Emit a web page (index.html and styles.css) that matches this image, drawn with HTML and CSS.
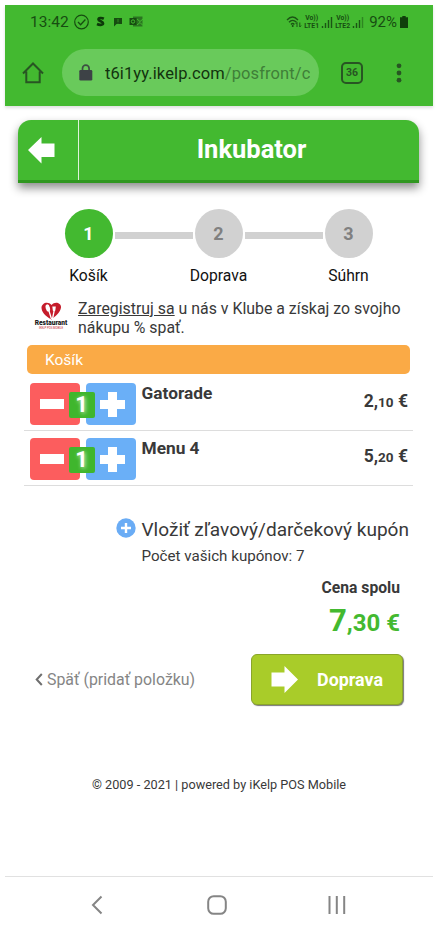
FILE: index.html
```html
<!DOCTYPE html>
<html lang="sk">
<head>
<meta charset="utf-8">
<title>Inkubator</title>
<link rel="stylesheet" href="styles.css">
</head>
<body>
<div class="phone">
  <header class="chrome">
    <div class="status">
      <span class="time">13:42</span>
      <svg class="notif" width="72" height="18" viewBox="0 0 72 18">
        <circle cx="7.500" cy="9" r="6.800" fill="none" stroke="#164c10" stroke-width="1.200"/>
        <path d="M4 9l2.600 2.700 4.800-5.200" fill="none" stroke="#164c10" stroke-width="1.300"/>
        <path d="M29.800 5.700c-2.200-1.100-5.300-.9-5.300.7 0 2.200 4.500 1.700 4.500 3.900 0 2-3.800 1.800-6 .8" fill="none" stroke="#0d3a09" stroke-width="2.700"/>
        <path d="M40 5h8v6h-5.500l-2.500 2.500z" fill="#164c10"/>
        <path d="M44 6v3M44 9.700v.8" stroke="#43b930" stroke-width=".6"/>
        <path d="M59 3.500h9.500v10h-9.500z" fill="#2a7420"/>
        <path d="M55.500 5h7v7h-7z" fill="#164c10"/>
        <circle cx="59" cy="8.500" r="1.700" fill="none" stroke="#43b930"/>
        <path d="M63 6l3 2.500 3-2.500M63 12l3-2.500 3 3" fill="none" stroke="#43b930" stroke-width="1"/>
      </svg>
      <div class="signals">
        <svg width="17" height="16" viewBox="0 0 17 16" fill="none" stroke="#1b5514" stroke-width="1.300">
          <path d="M1 6q5.500-6 11 0M3 8.300q3.500-4 7.500 0M5 10.500q1.700-2 3.400 0"/>
          <path d="M6.700 11v2" stroke-width="1.600"/><path d="M11 13v-4.500l-1.300 1.500M13.800 8.500v4.500l1.300-1.500" stroke-width="1"/>
        </svg>
        <span class="volte"><b>Vo))</b><b>LTE1</b></span>
        <svg width="12" height="13" viewBox="0 0 12 13" stroke="#1b5514" stroke-width="1.400"><path d="M1.500 12v-2M4.500 12v-5M7.500 12v-8M10.500 12v-11"/></svg>
        <span class="volte second"><b>Vo))</b><b>LTE2</b></span>
        <svg width="12" height="13" viewBox="0 0 12 13" stroke="#1b5514" stroke-width="1.400"><path d="M1.500 12v-2M4.500 12v-5M7.500 12v-8"/><path d="M10.500 12v-11" opacity=".5"/></svg>
      </div>
      <span class="percent">92%</span>
      <svg class="battery" width="8" height="12" viewBox="0 0 8 12" fill="#103f0b"><path d="M2.300 0h3.400v1.300h2.300v10.700h-8v-10.700h2.300z"/></svg>
    </div>
    <div class="browser">
      <svg class="home" width="22" height="24" viewBox="0 0 22 24" fill="none" stroke="#285523" stroke-width="2"><path d="M1 12.500L11 2.500l10 10M4.300 10.500v10.700h13.400v-10.700"/></svg>
      <div class="address">
        <svg width="14" height="18" viewBox="0 0 14 18"><path d="M3.500 7v-2.500a3.300 3.300 0 0 1 6.600 0v2.500" fill="none" stroke="#3d4f42" stroke-width="1.700"/><rect x=".3" y="6" width="13" height="10.500" rx="1.300" fill="#3d4246"/></svg>
        <div class="url"><span>t6i1yy.ikelp.com</span>/posfront/c</div>
      </div>
      <div class="tabs">36</div>
      <svg class="more" width="6" height="20" viewBox="0 0 6 20" fill="#285523"><circle cx="3" cy="2.800" r="2.400"/><circle cx="3" cy="10" r="2.400"/><circle cx="3" cy="17.200" r="2.400"/></svg>
    </div>
  </header>

  <main>
    <div class="titlebar">
      <div class="back"><svg width="27" height="27" viewBox="0 0 27 27"><path d="M0 13L13.500 0v6.500h13v13.500h-13v6.500z" fill="#fff"/></svg></div>
      <h1>Inkubator</h1>
    </div>

    <div class="steps">
      <div class="step active"><span class="dot">1</span><span class="label">Košík</span></div>
      <i class="line"></i>
      <div class="step"><span class="dot">2</span><span class="label">Doprava</span></div>
      <i class="line"></i>
      <div class="step"><span class="dot">3</span><span class="label">Súhrn</span></div>
    </div>

    <div class="club">
      <div class="logo">
        <svg width="21" height="18" viewBox="0 0 21 18">
          <path d="M10.500 17.500C7 15.500 1 12 .5 6 .300 1 7-1.500 10.500 3c3.500-4 10-2 9.500 2.500-.5 5-6 9-9.500 12z" fill="#c51c2b"/>
          <ellipse cx="6.800" cy="6" rx="2.100" ry="3.700" transform="rotate(-15 6.800 6)" fill="#fff"/>
          <path d="M8 9l2.500 8M13.300 8l-1.800 9" fill="none" stroke="#fff" stroke-width="1.300"/>
          <path d="M11.300 4.500l.5 4q1.200 1.500 2.500 0l.5-4z" fill="#fff"/>
        </svg>
        <b>Restaurant</b>
        <small>IKELP POS MOBILE</small>
      </div>
      <p><u>Zaregistruj sa</u> u nás v Klube a získaj zo svojho<br>nákupu % spať.</p>
    </div>

    <div class="cart-head">Košík</div>
    <div class="item">
      <div class="qty">
        <span class="btn minus"><svg width="24" height="10"><path d="M0 0h24v10h-24z" fill="#fff"/></svg></span>
        <span class="btn plus"><svg width="25" height="25" viewBox="0 0 25 25"><path d="M8 0h9v8h8v9h-8v8h-9v-8h-8v-9h8z" fill="#fff"/></svg></span>
        <b class="count">1</b>
      </div>
      <h2>Gatorade</h2>
      <div class="price">2,<small>10</small> €</div>
    </div>
    <div class="item">
      <div class="qty">
        <span class="btn minus"><svg width="24" height="10"><path d="M0 0h24v10h-24z" fill="#fff"/></svg></span>
        <span class="btn plus"><svg width="25" height="25" viewBox="0 0 25 25"><path d="M8 0h9v8h8v9h-8v8h-9v-8h-8v-9h8z" fill="#fff"/></svg></span>
        <b class="count">1</b>
      </div>
      <h2>Menu 4</h2>
      <div class="price">5,<small>20</small> €</div>
    </div>

    <div class="coupon">
      <svg width="20" height="20" viewBox="0 0 20 20"><circle cx="10" cy="10" r="9.700" fill="#6aacf5"/><path d="M10 5v10M5 10h10" stroke="#fff" stroke-width="2.400"/></svg>
      <div><div class="coupon-add">Vložiť zľavový/darčekový kupón</div><div class="coupon-count">Počet vašich kupónov: 7</div></div>
    </div>

    <div class="total-label">Cena spolu</div>
    <div class="total"><span>7</span>,30 €</div>

    <div class="actions">
      <a class="return"><svg width="8" height="13" viewBox="0 0 8 13"><path d="M6.800 1L1.700 6.500l5.100 5.500" fill="none" stroke="#6f6f6f" stroke-width="2"/></svg><span>Späť (pridať položku)</span></a>
      <a class="next"><svg width="27" height="27" viewBox="0 0 27 27"><path d="M27 13.500L13.500 0v6.500h-13v14h13v6.500z" fill="#fff"/></svg><span>Doprava</span></a>
    </div>
  </main>
  <footer>© 2009 - 2021 | powered by iKelp POS Mobile</footer>
  <nav>
    <svg width="12" height="20" viewBox="0 0 12 20"><path d="M10.500 1.500L2 10l8.500 8.500" fill="none" stroke="#858585" stroke-width="2"/></svg>
    <svg width="20" height="20" viewBox="0 0 20 20"><rect x="1.200" y="1.200" width="17.600" height="17.600" rx="5.500" fill="none" stroke="#858585" stroke-width="2"/></svg>
    <svg width="18" height="20" viewBox="0 0 18 20"><path d="M1.500 1v18M8.800 1v18M16.200 1v18" stroke="#858585" stroke-width="2"/></svg>
  </nav>
</div>
</body>
</html>
```
FILE: styles.css
```css
* { box-sizing: border-box; }
body { margin: 0; background: #fff; font-family: Roboto, "Liberation Sans", sans-serif; color: #393939; }
svg { display: block; flex: none; }
h1, h2, p { margin: 0; }
.phone { width: 428px; height: 934px; margin: 5px 0 0 5px; display: flex; flex-direction: column; }

.chrome { height: 101px; flex: none; background: #43b930; box-shadow: 0 2px 3px rgba(0,0,0,.13); }
.status { height: 34px; display: flex; align-items: center; padding: 0 25px 0 25px; color: #174d11; }
.time { width: 39px; font-size: 15.500px; white-space: nowrap; }
.notif { margin-left: 5px; }
.signals { display: flex; align-items: center; margin-left: auto; }
.volte { display: flex; flex-direction: column; width: 17px; font-size: 6.800px; line-height: 8px; text-align: center; margin-right: 1px; }
.volte.second { margin-left: 1px; }
.percent { font-size: 15px; margin-left: 5px; }
.battery { margin-left: 3px; }
.browser { height: 67px; display: flex; align-items: center; padding: 0 27px 0 17px; }
.address { width: 257px; height: 47px; margin-left: 18px; border-radius: 24px; background: #69ca5b; display: flex; align-items: center; padding: 0 9px 0 17px; }
.url { margin-left: 12px; flex: 1; overflow: hidden; white-space: nowrap; font-size: 16.500px; color: #3f7f38; letter-spacing: .1px; line-height: 24px; padding-top: 2px; }
.url span { color: #12330e; }
.tabs { width: 22px; height: 22px; margin-left: 22px; border: 2px solid #285523; border-radius: 5px; font-size: 10.500px; font-weight: 700; line-height: 18px; text-align: center; color: #285523; }
.more { margin-left: auto; margin-right: 4px; }

main { padding: 14px 14px 0 13px; }
.titlebar { height: 63px; display: flex; background: #43b930; border-bottom: 3px solid #309720; border-radius: 13px 13px 0 0; box-shadow: 0 5px 10px rgba(0,0,0,.45); color: #fff; }
.back { width: 61px; border-right: 1px solid #dff3db; padding: 17px 0 0 10px; }
h1 { flex: 1; text-align: center; font-size: 25.500px; line-height: 59px; font-weight: 700; padding-left: 5px; }

.steps { display: flex; justify-content: center; margin: 26px 0 0; }
.step { width: 48px; display: flex; flex-direction: column; align-items: center; }
.dot { width: 48px; height: 49px; border-radius: 50%; background: #d1d1d1; color: #808080; font-size: 18px; font-weight: 700; line-height: 50px; text-align: center; }
.active .dot { background: #43b930; color: #fff; }
.label { margin-top: 8px; font-size: 15.700px; line-height: 19px; color: #111; white-space: nowrap; }
.line { width: 78px; height: 7px; margin: 23px 2px 0; background: #d1d1d1; }

.club { display: flex; margin-top: 15px; }
.logo { width: 34px; margin-left: 16px; display: flex; flex-direction: column; align-items: center; padding-top: 2px; }
.logo b { font-size: 6.600px; line-height: 7px; font-weight: 900; color: #202020; }
.logo small { font-size: 2.800px; line-height: 3px; color: #c51c2b; }
.club p { margin-left: 10px; font-size: 15.880px; line-height: 18.500px; white-space: nowrap; }

.cart-head { height: 29px; margin: 8px 9px 0 9px; padding-left: 18px; border-radius: 5px; background: #faaa46; color: #fff; font-size: 15.500px; line-height: 30px; }
.item { height: 55px; margin: 0 6px; border-bottom: 1px solid #ddd; display: flex; padding: 7px 5px 0 5.500px; }
.cart-head + .item { height: 57px; padding-top: 9px; }
.qty { position: relative; display: flex; gap: 6px; }
.btn { width: 50px; height: 42px; border-radius: 4px; display: flex; align-items: center; justify-content: center; }
.minus { background: #fc5d5e; padding-right: 6px; }
.plus { background: #6aaff7; padding-left: 3px; }
.count { position: absolute; left: 39px; top: 9px; width: 26px; height: 26px; border-radius: 2px; background: #3fb62d; color: #fff; font-size: 22px; line-height: 25px; text-align: center; text-shadow: 1px 1px 4px rgba(255,255,255,.8); }
h2 { margin-left: 6px; font-size: 17.300px; line-height: 21px; font-weight: 700; }
.price { margin-left: auto; padding-top: 7px; font-size: 17.500px; line-height: 22px; font-weight: 700; }
.price small { font-size: 13.500px; }

.coupon { display: flex; gap: 5px; margin: 32px 10px 0 0; justify-content: flex-end; }
.coupon-add { font-size: 19.060px; line-height: 24px; white-space: nowrap; }
.coupon-count { font-size: 15.150px; line-height: 20px; margin-top: 4px; }
.total-label { margin: 12px 19px 0 0; font-size: 15.700px; line-height: 20px; font-weight: 700; text-align: right; }
.total { margin: 3px 19px 0 0; font-size: 24px; line-height: 40px; font-weight: 700; text-align: right; color: #43b930; }
.total span { font-size: 31px; }
.actions { display: flex; justify-content: space-between; align-items: center; margin: 11px 16px 0 17px; }
.return { display: flex; align-items: center; gap: 4px; font-size: 15.900px; color: #858585; }
.next { width: 152px; height: 51px; display: flex; align-items: center; padding-left: 19px; border: 1px solid #8aa52a; border-radius: 6px; background: #a9cc29; box-shadow: 1px 1px 1px #777; color: #fff; font-size: 17.900px; font-weight: 700; }
.next span { margin-left: 19px; }
footer { margin-top: 71px; text-align: center; font-size: 12.700px; line-height: 18px; }
nav { height: 58px; margin-top: auto; margin-bottom: 5px; border-top: 1px solid #e1e1e1; display: grid; grid-template-columns: 184px 56px 184px; justify-items: center; padding-top: 18px; }
```
